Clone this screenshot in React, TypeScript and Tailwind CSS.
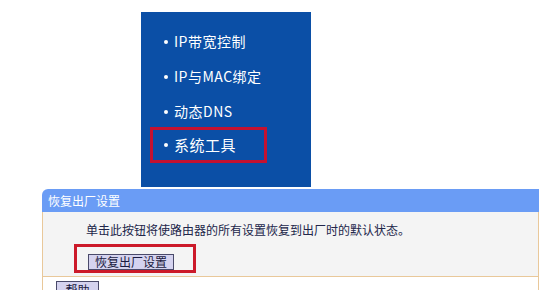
export default function App() {
  const menu = ['IP带宽控制', 'IP与MAC绑定', '动态DNS']

  return (
    <div
      className="relative w-[541px] h-[290px] overflow-hidden bg-white"
      style={{ fontFamily: '"Noto Sans CJK SC", "Liberation Sans", sans-serif' }}
    >
      {/* Side menu */}
      <div className="ml-[141px] mt-[12px] w-[170px] h-[175px] bg-[#0b4fa6] pt-[12px] text-white">
        {menu.map((item) => (
          <div key={item} className="h-[35px] flex items-center pl-[23px] gap-[6px] text-[14px] tracking-[0.5px]">
            <span className="w-[4px] h-[4px] rounded-full bg-white" />
            <span>{item}</span>
          </div>
        ))}
        <div className="ml-[9px] -mt-[2px] w-[117px] h-[36px] border-[3px] border-[#c41230] flex items-center pl-[11px] gap-[6px] text-[15px] tracking-[0.5px]">
          <span className="w-[4px] h-[4px] rounded-full bg-white" />
          <span>系统工具</span>
        </div>
      </div>

      {/* Restore panel */}
      <div className="ml-[42px] mt-[2px] w-[497px]">
        <div className="h-[23px] bg-[#6a9cf5] rounded-tl-[6px] flex items-center pl-[6px] text-[12px] text-white">
          恢复出厂设置
        </div>
        <div className="h-[65px] bg-[#f4f4f4] border-x border-b border-[#e9c89a] pt-[10px] pl-[43px] text-[12px] text-[#22264a]">
          <div className="h-[16px] leading-[16px]">单击此按钮将使路由器的所有设置恢复到出厂时的默认状态。</div>
          <div className="ml-[-12px] mt-[6px] w-[122px] h-[29px] border-[3px] border-[#cc1a2a] pl-[11px] pt-[6px]">
            <button className="h-[16px] w-[86px] border border-[#4a4a6a] bg-[#d5d3ef] text-[12px] leading-[14px] text-[#1a1a40]">
              恢复出厂设置
            </button>
          </div>
        </div>
        <div className="h-[20px] border-x border-[#e9c89a] pl-[13px] pt-[4px]">
          <button className="h-[18px] w-[43px] border border-[#4a4a6a] bg-[#d5d3ef] text-[12px] leading-[16px] text-[#1a1a40] align-top">
            帮助
          </button>
        </div>
      </div>
    </div>
  )
}
